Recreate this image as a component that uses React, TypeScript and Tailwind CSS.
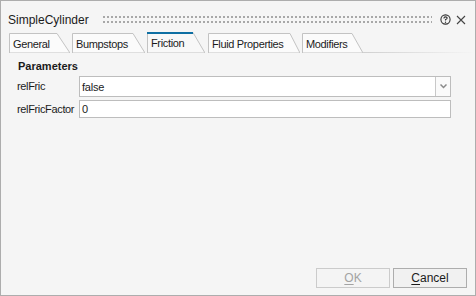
import React from 'react'

const font = { fontFamily: '"Liberation Sans", Arial, sans-serif' }

type TabProps = { label: string; width: number; slant: number; active?: boolean; ml: number }

function Tab({ label, width, slant, active, ml }: TabProps) {
  const h = active ? 21 : 20
  return (
    <div className={`relative ${active ? 'h-[21px]' : 'h-[20px] mt-[1px]'}`} style={{ width, marginLeft: ml }}>
      <svg className="absolute inset-0" width={width} height={h}>
        <polygon points={`0.5,${h} 0.5,0.5 ${width - slant},0.5 ${width},${h}`} fill={active ? '#f8f8f8' : '#fbfbfb'} stroke="#c3c3c3" strokeWidth="1" />
        {active && <line x1="0" y1="1" x2={width - slant} y2="1" stroke="#0e6fa3" strokeWidth="2" />}
      </svg>
      <span className="relative block pl-[4px] pt-[5px] text-[11px] leading-[12px] tracking-[-0.35px] text-[#1b1b1b]">{label}</span>
    </div>
  )
}

export default function App() {
  return (
    <div className="w-[476px] h-[296px] border border-[#adadad] bg-[#f5f5f5] flex flex-col text-[#1b1b1b]" style={font}>
      <div className="flex items-center h-[30px] pl-[7px] pr-[9px] pt-[7px]">
        <span className="text-[12px]">SimpleCylinder</span>
        <div className="flex-1 ml-[14px] mr-[8px] h-[7px] flex flex-col justify-between">
          <div className="h-[2px] bg-[linear-gradient(to_right,#a8a8a8_2px,transparent_2px)] bg-[length:4px_2px]" />
          <div className="h-[2px] bg-[linear-gradient(to_right,#a8a8a8_2px,transparent_2px)] bg-[length:4px_2px]" />
        </div>
        <svg width="11" height="11" viewBox="0 0 11 11" className="mr-[5px]">
          <circle cx="5.5" cy="5.5" r="4.6" fill="none" stroke="#333" strokeWidth="1.1" />
          <path d="M3.9 4.4 Q3.9 2.9 5.5 2.9 Q7.1 2.9 7.1 4.2 Q7.1 5 5.5 5.6 L5.5 6.6" fill="none" stroke="#333" strokeWidth="1.1" />
          <circle cx="5.5" cy="8.2" r="0.7" fill="#333" />
        </svg>
        <svg width="10" height="10" viewBox="0 0 10 10">
          <path d="M1 1 L9 9 M9 1 L1 9" stroke="#444" strokeWidth="1.1" />
        </svg>
      </div>
      <div className="flex items-end h-[21px] mt-[1px]">
        <Tab label="General" width={61} slant={13} ml={8} />
        <Tab label="Bumpstops" width={73} slant={12} ml={2} />
        <Tab label="Friction" width={58} slant={12} ml={2} active />
        <Tab label="Fluid Properties" width={92} slant={10} ml={3} />
        <Tab label="Modifiers" width={61} slant={11} ml={2} />
        <div className="flex-1 h-[1px] bg-gradient-to-r from-[#d0d0d0] to-transparent" />
      </div>
      <div className="flex flex-col pl-[16px] pr-[24px] pt-[7px]">
        <div className="text-[11px] font-bold leading-[13px] pl-[1px]">Parameters</div>
        <div className="flex items-center mt-[3px]">
          <span className="w-[62px] text-[11px] tracking-[-0.35px]">relFric</span>
          <div className="flex-1 h-[21px] flex bg-white border border-[#bdbdbd]">
            <span className="flex-1 pl-[2px] pt-[3px] text-[11px] tracking-[-0.2px] leading-[14px]">false</span>
            <div className="w-[15px] border-l border-[#c8c8c8] flex items-center justify-center bg-[#fafafa]">
              <svg width="7" height="5" viewBox="0 0 7 5">
                <path d="M0.5 0.5 L3.5 3.5 L6.5 0.5" fill="none" stroke="#8a8a8a" strokeWidth="1.5" />
              </svg>
            </div>
          </div>
        </div>
        <div className="flex items-center mt-[3px]">
          <span className="w-[62px] text-[11px] tracking-[-0.35px]">relFricFactor</span>
          <div className="flex-1 h-[18px] bg-white border border-[#bdbdbd] pl-[2px] text-[11px] leading-[16px]">0</div>
        </div>
      </div>
      <div className="flex-1" />
      <div className="flex justify-end gap-[3px] pr-[8px] pb-[7px]">
        <button className="w-[74px] h-[20px] border border-[#cbcbcb] bg-[#f4f4f4] text-[12px] text-[#a3a3a3]">
          <span className="underline underline-offset-2">O</span>K
        </button>
        <button className="w-[74px] h-[20px] border border-[#adadad] bg-[#f1f1f1] text-[12px] text-[#1b1b1b]">
          <span className="underline underline-offset-2">C</span>ancel
        </button>
      </div>
    </div>
  )
}
